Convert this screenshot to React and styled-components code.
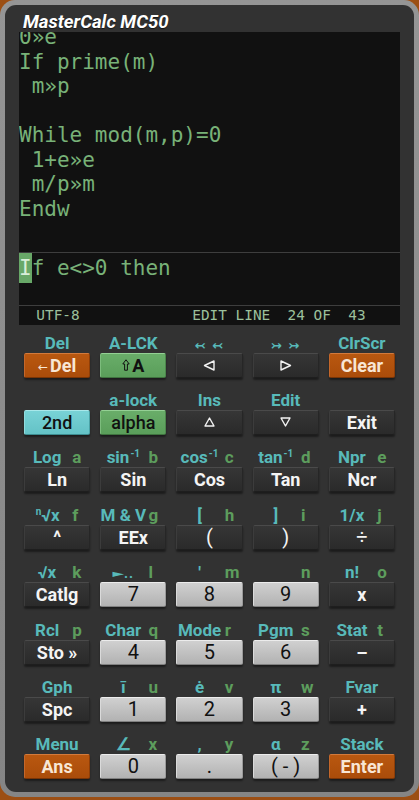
import React from "react";
import styled, { createGlobalStyle, css } from "styled-components";

const GlobalStyle = createGlobalStyle`
  html, body {
    margin: 0;
    padding: 0;
    background: #9c4f14;
  }
  body {
    font-family: Roboto, "Liberation Sans", sans-serif;
  }
`;

const CODE = ["0»e", "If prime(m)", " m»p", "", "While mod(m,p)=0", " 1+e»e", " m/p»m", "Endw"];

const Tri = ({ dir }) => {
  const pts = {
    left: "11,1 11,10 1.5,5.5",
    right: "1,1 1,10 10.5,5.5",
    up: "5.5,1 10,9 1,9",
    down: "1,1 10,1 5.5,9",
  }[dir];
  const w = dir === "left" || dir === "right" ? 12 : 11;
  return (
    <svg width={w} height="11" viewBox={`0 0 ${w} 11`}>
      <polygon points={pts} fill="none" stroke="#f2f2f2" strokeWidth="1.4" strokeLinejoin="round" />
    </svg>
  );
};

const ShiftArrow = () => (
  <svg width="8" height="12" viewBox="0 0 8 12" style={{ marginRight: 2 }}>
    <path d="M4 0.8 L7.2 5 H5.4 V11.2 H2.6 V5 H0.8 Z" fill="none" stroke="#111" strokeWidth="1" strokeLinejoin="round" />
  </svg>
);

const buildRows = () => [
  [
    { s: "Del", k: "orange", t: <><SmallArrow>←</SmallArrow>Del</> },
    { s: "A-LCK", k: "green", t: <><ShiftArrow />A</> },
    { s: <Arrows>↢ ↢</Arrows>, k: "dark", t: <Tri dir="left" /> },
    { s: <Arrows>↣ ↣</Arrows>, k: "dark", t: <Tri dir="right" /> },
    { s: "ClrScr", k: "orange", t: "Clear" },
  ],
  [
    { k: "cyan", t: "2nd", w: 500 },
    { s: "a-lock", k: "green", t: "alpha", w: 500 },
    { s: "Ins", k: "dark", t: <Tri dir="up" /> },
    { s: "Edit", k: "dark", t: <Tri dir="down" /> },
    { k: "dark", t: "Exit" },
  ],
  [
    { s: "Log", a: "a", k: "dark", t: "Ln" },
    { s: <>sin<Sup>-1</Sup></>, a: "b", k: "dark", t: "Sin" },
    { s: <>cos<Sup>-1</Sup></>, a: "c", k: "dark", t: "Cos" },
    { s: <>tan<Sup>-1</Sup></>, a: "d", k: "dark", t: "Tan" },
    { s: "Npr", a: "e", k: "dark", t: "Ncr" },
  ],
  [
    { s: <><Sup>n</Sup>√x</>, a: "f", k: "dark", t: "^" },
    { s: "M & V", a: "g", k: "dark", t: "EEx" },
    { s: "[", a: "h", k: "dark", t: "(", w: 400, z: 20 },
    { s: "]", a: "i", k: "dark", t: ")", w: 400, z: 20 },
    { s: "1/x", a: "j", k: "dark", t: "÷", w: 400, z: 20 },
  ],
  [
    { s: "√x", a: "k", k: "dark", t: "Catlg" },
    { s: <><Pointer>►</Pointer><Dots>..</Dots></>, a: "l", k: "light", t: "7" },
    { s: "'", a: "m", k: "light", t: "8" },
    { s: "", a: "n", k: "light", t: "9" },
    { s: "n!", a: "o", k: "dark", t: "x" },
  ],
  [
    { s: "Rcl", a: "p", k: "dark", t: "Sto »" },
    { s: "Char", a: "q", k: "light", t: "4" },
    { s: "Mode", a: "r", k: "light", t: "5" },
    { s: "Pgm", a: "s", k: "light", t: "6" },
    { s: "Stat", a: "t", k: "dark", t: "–" },
  ],
  [
    { s: "Gph", k: "dark", t: "Spc" },
    { s: "ī", a: "u", k: "light", t: "1" },
    { s: "ė", a: "v", k: "light", t: "2" },
    { s: "π", a: "w", k: "light", t: "3" },
    { s: "Fvar", k: "dark", t: "+" },
  ],
  [
    { s: "Menu", k: "orange", t: "Ans" },
    { s: "∠", a: "x", k: "light", t: "0" },
    { s: ",", a: "y", k: "light", t: "." },
    { s: "α", a: "z", k: "light", t: "( - )" },
    { s: "Stack", k: "orange", t: "Enter" },
  ],
];

export default function App() {
  const rows = buildRows();
  return (
    <Page>
      <GlobalStyle />
      <Bezel>
        <Panel>
          <Title>MasterCalc MC50</Title>
          <Screen>
            <CodeArea>
              <CodeText>{CODE.join("\n")}</CodeText>
            </CodeArea>
            <ScreenRule />
            <EditArea>
              <EditLine>
                <Cursor>I</Cursor>f e&lt;&gt;0 then
              </EditLine>
            </EditArea>
            <ScreenRule />
            <Status>{"  UTF-8             EDIT LINE  24 OF  43"}</Status>
          </Screen>
          <Keypad>
            {rows.flat().map((b, i) => (
              <Cell key={i}>
                <Label>
                  {b.a === undefined ? (
                    b.s !== undefined && <ShiftText $wide>{b.s}</ShiftText>
                  ) : (
                    <>
                      <ShiftText>{b.s}</ShiftText>
                      <AlphaText>{b.a}</AlphaText>
                    </>
                  )}
                </Label>
                <Key $kind={b.k} $weight={b.w} $size={b.z}>
                  {b.t}
                </Key>
              </Cell>
            ))}
          </Keypad>
        </Panel>
      </Bezel>
    </Page>
  );
}

const Page = styled.div`
  width: 419px;
  height: 800px;
  box-sizing: border-box;
  padding-bottom: 3px;
  background: #9c4f14;
  overflow: hidden;
`;

const Bezel = styled.div`
  height: 100%;
  box-sizing: border-box;
  padding: 5px;
  border-radius: 15px;
  background: linear-gradient(#959595, #858585);
`;

const Panel = styled.div`
  height: 100%;
  box-sizing: border-box;
  padding-top: 7px;
  border-radius: 11px;
  background: #323232;
  display: flex;
  flex-direction: column;
`;

const Title = styled.div`
  height: 20px;
  padding-left: 18px;
  color: #ffffff;
  font: italic 700 18.6px/20px Roboto, "Liberation Sans", sans-serif;
  text-shadow: 0 1px 1px rgba(0, 0, 0, 0.6);
  white-space: nowrap;
`;

const Screen = styled.div`
  margin: 0 14px;
  background: #111111;
  display: flex;
  flex-direction: column;
`;

const CodeArea = styled.div`
  height: 220px;
  overflow: hidden;
`;

const CodeText = styled.pre`
  margin: -7px 0 0;
  font: 21px/24.5px "DejaVu Sans Mono", "Liberation Mono", monospace;
  color: #78b278;
`;

const ScreenRule = styled.div`
  height: 1px;
  background: #3e3e3e;
`;

const EditArea = styled.div`
  height: 52px;
`;

const EditLine = styled.div`
  font: 21px/30px "DejaVu Sans Mono", "Liberation Mono", monospace;
  color: #78b278;
  white-space: pre;
`;

const Cursor = styled.span`
  display: inline-block;
  background: #68a868;
  color: #d8eed8;
`;

const Status = styled.div`
  height: 19px;
  font: 14.4px/19px "DejaVu Sans Mono", "Liberation Mono", monospace;
  color: #9cc09c;
  white-space: pre;
`;

const Keypad = styled.div`
  padding: 8.5px 19px 0;
  display: grid;
  grid-template-columns: repeat(5, 1fr);
  column-gap: 10px;
  row-gap: 13.43px;
`;

const Cell = styled.div`
  display: flex;
  flex-direction: column;
`;

const Label = styled.div`
  height: 19px;
  display: grid;
  grid-template-columns: 70% 30%;
  font: 700 17px/19px Roboto, "Liberation Sans", sans-serif;
  white-space: nowrap;
`;

const ShiftText = styled.span`
  color: #58baba;
  text-align: center;
  ${(p) =>
    p.$wide &&
    css`
      grid-column: 1 / -1;
    `}
`;

const AlphaText = styled.span`
  color: #5d9d5d;
  text-align: left;
  padding-left: 2px;
`;

const Sup = styled.span`
  font-size: 10px;
  vertical-align: 6px;
  line-height: 0;
  margin-left: 1px;
`;

const Arrows = styled.span`
  font: 700 13px/19px "DejaVu Sans", sans-serif;
  display: inline-block;
  padding-top: 2px;
  letter-spacing: 1px;
`;

const Pointer = styled.span`
  display: inline-block;
  font: 15px "DejaVu Sans", sans-serif;
  transform: scaleY(0.7);
`;

const Dots = styled.span`
  font-size: 14px;
  letter-spacing: 1px;
`;

const SmallArrow = styled.span`
  font: 400 12px "DejaVu Sans", sans-serif;
  margin-right: 2px;
  position: relative;
  top: 2px;
`;

const kinds = {
  dark: css`
    background: linear-gradient(#363636, #2a2a2a);
    border-top: 1px solid #4a4a4a;
    border-left: 1px solid #3c3c3c;
    border-right: 1px solid #262626;
    border-bottom: 1px solid #1e1e1e;
    color: #f4f4f4;
  `,
  light: css`
    background: linear-gradient(#d0d0d0, #b2b2b2);
    border-top: 1px solid #ececec;
    border-left: 1px solid #dadada;
    border-right: 1px solid #9a9a9a;
    border-bottom: 1px solid #808080;
    color: #111111;
    font-weight: 400;
    font-size: 20px;
  `,
  orange: css`
    background: linear-gradient(#b95810, #aa4c0a);
    border-top: 1px solid #d27a3c;
    border-left: 1px solid #c4672a;
    border-right: 1px solid #8e3e08;
    border-bottom: 1px solid #7a3506;
    color: #f8e6d4;
  `,
  green: css`
    background: linear-gradient(#69ad69, #5a9e5a);
    border-top: 1px solid #94d094;
    border-left: 1px solid #7cbc7c;
    border-right: 1px solid #4c864c;
    border-bottom: 1px solid #3f733f;
    color: #111111;
  `,
  cyan: css`
    background: linear-gradient(#78d2d6, #64c2c6);
    border-top: 1px solid #a8e8ea;
    border-left: 1px solid #90dcde;
    border-right: 1px solid #4aa2a6;
    border-bottom: 1px solid #3c8c90;
    color: #111111;
  `,
};

const Key = styled.div`
  height: 25px;
  box-sizing: border-box;
  border-radius: 2px;
  display: flex;
  align-items: center;
  justify-content: center;
  font: 700 18px/23px Roboto, "Liberation Sans", sans-serif;
  white-space: pre;
  box-shadow: 0 2px 2px rgba(0, 0, 0, 0.45);
  ${(p) => kinds[p.$kind]}
  ${(p) =>
    p.$weight &&
    css`
      font-weight: ${p.$weight};
    `}
  ${(p) =>
    p.$size &&
    css`
      font-size: ${p.$size}px;
    `}
`;
